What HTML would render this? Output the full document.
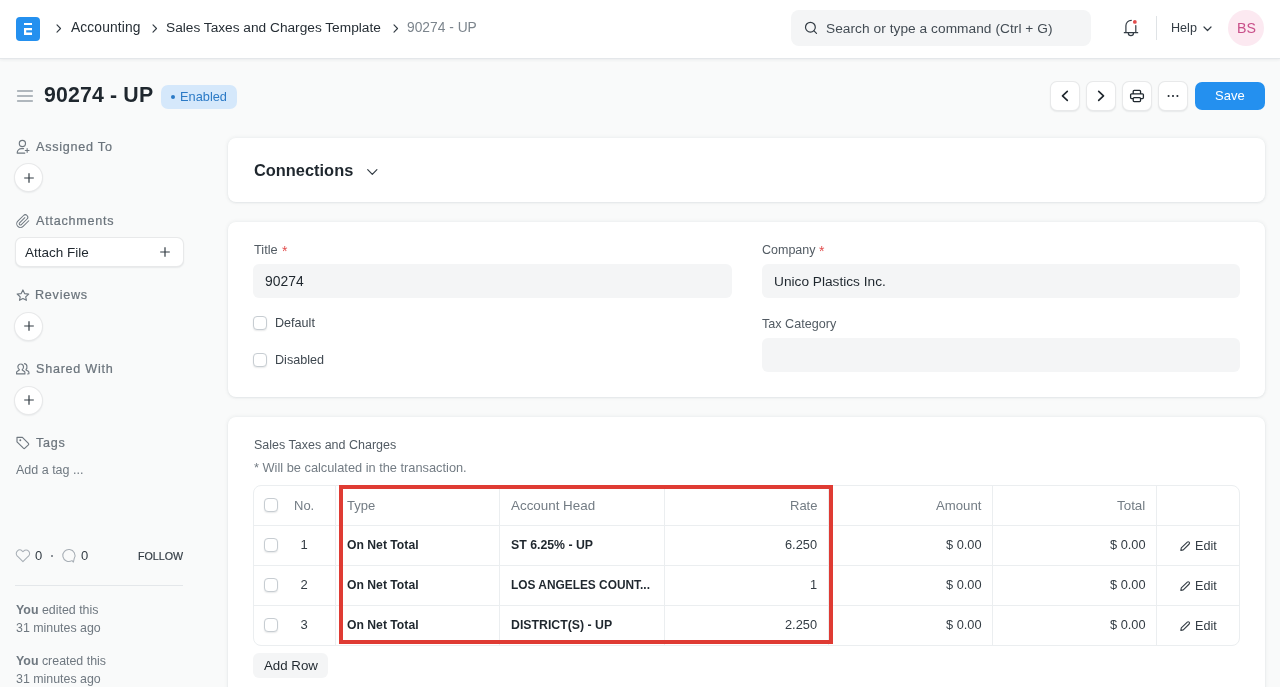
<!DOCTYPE html>
<html><head><meta charset="utf-8"><title>90274 - UP</title>
<style>
*{box-sizing:border-box;margin:0;padding:0}
html,body{width:1280px;height:687px;overflow:hidden}
body{background:#F9FAFA;font-family:"Liberation Sans",sans-serif;position:relative;color:#1F272E}
.t{position:absolute;line-height:1;white-space:nowrap;will-change:transform}
.a{position:absolute}
svg{position:absolute;overflow:visible}
.nav{position:absolute;left:0;top:0;width:1280px;height:59px;background:#fff;border-bottom:1px solid #E4E7EA;box-shadow:0 1px 3px rgba(25,39,52,0.07)}
.card{position:absolute;left:228px;width:1037px;background:#fff;border-radius:8px;box-shadow:0 1px 2px rgba(25,39,52,0.05),0 0 4px rgba(25,39,52,0.09)}
.inp{position:absolute;background:#F4F5F6;border-radius:6px;height:33.5px}
.cb{position:absolute;width:14px;height:14px;border:1px solid #C7CDD2;border-radius:4px;background:#fff;box-shadow:0 1px 1.5px rgba(25,39,52,0.10)}
.btn{position:absolute;background:#fff;border-radius:7px;border:1px solid rgba(25,39,52,0.10);box-shadow:0 1px 1.5px rgba(25,39,52,0.08)}
.circ{position:absolute;width:29px;height:29px;border-radius:50%;background:#fff;border:1px solid rgba(25,39,52,0.10);box-shadow:0 1px 1.5px rgba(25,39,52,0.07)}
</style></head><body>
<div class="nav"></div>
<div class="a" style="left:16px;top:17px;width:24px;height:24px;background:#2490EF;border-radius:4px"></div>
<svg style="left:16px;top:17px" width="24" height="24" viewBox="0 0 24 24"><path d="M8 6h8v2.1H8z M8 11h8v2.3h-5.8v2.25h5.8v2.55H8z" fill="#fff"/></svg>
<svg style="left:55.5px;top:24px" width="6" height="9" viewBox="0 0 6 9"><path d="M1 0.9 L4.5 4.5 L1 8.1" fill="none" stroke="#333C44" stroke-width="1.15" stroke-linecap="round" stroke-linejoin="round"/></svg>
<svg style="left:151.5px;top:24px" width="6" height="9" viewBox="0 0 6 9"><path d="M1 0.9 L4.5 4.5 L1 8.1" fill="none" stroke="#333C44" stroke-width="1.15" stroke-linecap="round" stroke-linejoin="round"/></svg>
<svg style="left:392.5px;top:24px" width="6" height="9" viewBox="0 0 6 9"><path d="M1 0.9 L4.5 4.5 L1 8.1" fill="none" stroke="#333C44" stroke-width="1.15" stroke-linecap="round" stroke-linejoin="round"/></svg>
<div class="t" style="left:71.25px;top:21px;font-size:13.8px;color:#262E35;letter-spacing:0.12px;">Accounting</div>
<div class="t" style="left:166px;top:21px;font-size:13.7px;color:#262E35;">Sales Taxes and Charges Template</div>
<div class="t" style="left:407px;top:21px;font-size:13.8px;color:#7C858D;">90274 - UP</div>
<div class="a" style="left:791px;top:10px;width:300px;height:36px;background:#F4F5F6;border-radius:8px"></div>
<svg style="left:798px;top:16px" width="24" height="24" viewBox="0 0 24 24"><circle cx="12.4" cy="11.2" r="4.9" fill="none" stroke="#333C44" stroke-width="1.2"/><path d="M16 14.8 L18.5 17.3" stroke="#333C44" stroke-width="1.2" stroke-linecap="round"/></svg>
<div class="t" style="left:826px;top:22px;font-size:13.7px;color:#434C54;letter-spacing:0.05px;">Search or type a command (Ctrl + G)</div>
<svg style="left:1118px;top:14px" width="26" height="26" viewBox="0 0 26 26"><path d="M13.3 6.3 A5.4 5.4 0 0 0 7.9 11.7 V18 M17.8 11.5 V18 M6.3 18.7 H19.7 M10.3 19 A2.6 2.6 0 0 0 15.5 19" fill="none" stroke="#333C44" stroke-width="1.2" stroke-linecap="round" stroke-linejoin="round"/><circle cx="16.85" cy="7.95" r="1.9" fill="#E24C4C"/></svg>
<div class="a" style="left:1156px;top:16px;width:1px;height:24px;background:#DFE3E6"></div>
<div class="t" style="left:1170.5px;top:22px;font-size:12.6px;color:#333C44;">Help</div>
<svg style="left:1203px;top:26px" width="9" height="6" viewBox="0 0 9 6"><path d="M1 1 L4.5 4.5 L8 1" fill="none" stroke="#333C44" stroke-width="1.2" stroke-linecap="round" stroke-linejoin="round"/></svg>
<div class="a" style="left:1228px;top:10px;width:36px;height:36px;border-radius:50%;background:#FCE9F1"></div>
<div class="t" style="left:1236.5px;top:21px;font-size:14.2px;color:#C9508A;">BS</div>
<svg style="left:12px;top:84px" width="26" height="24" viewBox="0 0 26 24"><path d="M5.6 7 H20.3 M5.6 12 H20.3 M5.6 17 H20.3" stroke="#98A1A9" stroke-width="1.5" stroke-linecap="round"/></svg>
<div class="t" style="left:43.5px;top:85px;font-size:21.3px;color:#1F272E;font-weight:700;letter-spacing:0.15px;">90274 - UP</div>
<div class="a" style="left:161.25px;top:85px;width:75.5px;height:24px;background:#D5E8FB;border-radius:7px"></div>
<div class="a" style="left:171px;top:94.75px;width:4px;height:4px;border-radius:50%;background:#2B7AC6"></div>
<div class="t" style="left:180px;top:91px;font-size:12.8px;color:#2B7AC6;">Enabled</div>
<div class="btn" style="left:1050px;top:81px;width:29.5px;height:29.5px"></div>
<div class="btn" style="left:1086px;top:81px;width:29.5px;height:29.5px"></div>
<div class="btn" style="left:1122px;top:81px;width:29.5px;height:29.5px"></div>
<div class="btn" style="left:1158px;top:81px;width:29.5px;height:29.5px"></div>
<svg style="left:1061px;top:90px" width="8" height="12" viewBox="0 0 8 12"><path d="M6.3 1.4 L1.5 5.9 L6.3 10.4" fill="none" stroke="#1F272E" stroke-width="1.65" stroke-linecap="round" stroke-linejoin="round"/></svg>
<svg style="left:1097px;top:90px" width="8" height="12" viewBox="0 0 8 12"><path d="M1.7 1.4 L6.5 5.9 L1.7 10.4" fill="none" stroke="#1F272E" stroke-width="1.65" stroke-linecap="round" stroke-linejoin="round"/></svg>
<svg style="left:1123px;top:82px" width="28" height="28" viewBox="0 0 28 28"><path d="M10.2 11.6 V9.4 A1 1 0 0 1 11.2 8.4 H16.55 A1 1 0 0 1 17.55 9.4 V11.6 M10.2 16.6 H8.6 A1 1 0 0 1 7.6 15.6 V12.8 A1 1 0 0 1 8.6 11.8 H19.4 A1 1 0 0 1 20.4 12.8 V15.6 A1 1 0 0 1 19.4 16.6 H17.55 M11.2 15.7 H16.55 A1 1 0 0 1 17.55 16.7 V18.6 A1 1 0 0 1 16.55 19.6 H11.2 A1 1 0 0 1 10.2 18.6 V16.7 A1 1 0 0 1 11.2 15.7 Z" fill="none" stroke="#1F272E" stroke-width="1.3" stroke-linejoin="round"/></svg>
<svg style="left:1166px;top:94px" width="14" height="4" viewBox="0 0 14 4"><circle cx="2.6" cy="2" r="1.05" fill="#1F272E"/><circle cx="7" cy="2" r="1.05" fill="#1F272E"/><circle cx="11.4" cy="2" r="1.05" fill="#1F272E"/></svg>
<div class="a" style="left:1195px;top:81.5px;width:70px;height:28.5px;background:#2490EF;border-radius:7px"></div>
<div class="t" style="left:1215px;top:89px;font-size:13px;color:#FFFFFF;">Save</div>
<div class="t" style="left:36px;top:141px;font-size:12.6px;color:#6B747C;letter-spacing:0.75px;-webkit-text-stroke:0.22px #6B747C;">Assigned To</div>
<div class="t" style="left:36px;top:215px;font-size:12.6px;color:#6B747C;letter-spacing:0.75px;-webkit-text-stroke:0.22px #6B747C;">Attachments</div>
<div class="t" style="left:35px;top:289px;font-size:12.6px;color:#6B747C;letter-spacing:0.75px;-webkit-text-stroke:0.22px #6B747C;">Reviews</div>
<div class="t" style="left:36px;top:363px;font-size:12.6px;color:#6B747C;letter-spacing:0.75px;-webkit-text-stroke:0.22px #6B747C;">Shared With</div>
<div class="t" style="left:36px;top:437px;font-size:12.6px;color:#6B747C;letter-spacing:0.75px;-webkit-text-stroke:0.22px #6B747C;">Tags</div>
<svg style="left:14px;top:138px" width="20" height="20" viewBox="0 0 20 20"><circle cx="8.4" cy="5.5" r="3.1" fill="none" stroke="#6F7880" stroke-width="1.15" stroke-linecap="round" stroke-linejoin="round"/><path d="M9.6 10.6 H7.6 A4.4 4.4 0 0 0 3.2 15 V15.1 H10.8 M11.3 12.5 H15 M13.15 10.65 V14.35" fill="none" stroke="#6F7880" stroke-width="1.15" stroke-linecap="round" stroke-linejoin="round"/></svg>
<svg style="left:14px;top:211px" width="20" height="20" viewBox="0 0 20 20"><g transform="translate(1.5 2.9) scale(0.62)"><path d="M21.44 11.05l-9.19 9.19a6 6 0 0 1-8.49-8.49l9.19-9.19a4 4 0 0 1 5.66 5.66l-9.2 9.19a2 2 0 0 1-2.83-2.83l8.49-8.48" fill="none" stroke="#6F7880" stroke-width="1.65" stroke-linecap="round" stroke-linejoin="round"/></g></svg>
<svg style="left:14px;top:286px" width="20" height="20" viewBox="0 0 20 20"><path d="M8.9 3.9 L10.6 7.6 L14.7 8.1 L11.7 10.9 L12.4 14.3 L8.9 12.5 L5.5 14.3 L6.2 10.9 L3.2 8 L7.2 7.6 Z" fill="none" stroke="#6F7880" stroke-width="1.15" stroke-linecap="round" stroke-linejoin="round"/></svg>
<svg style="left:14px;top:360px" width="20" height="20" viewBox="0 0 20 20"><path d="M6.6 4 A2.7 2.9 0 0 0 3.9 6.9 A3 3 0 0 0 5.3 9.6 V10.1 L3.1 11.4 A1.4 1.4 0 0 0 2.6 12.5 V13.9 H10.9 V12.5 A1.4 1.4 0 0 0 10.4 11.4 L8.2 10.1 V9.6 A3 3 0 0 0 9.5 6.9 A2.7 2.9 0 0 0 6.6 4 Z M10.5 3.6 A2.9 2.9 0 0 1 12.9 6.6 A3 3 0 0 1 12 9.5 V10.1 L14.3 11.3 A1.4 1.4 0 0 1 14.9 12.4 V13.8 L13.6 14" fill="none" stroke="#6F7880" stroke-width="1.15" stroke-linecap="round" stroke-linejoin="round"/></svg>
<svg style="left:14px;top:433px" width="20" height="20" viewBox="0 0 20 20"><path d="M3 4.3 H8.4 L14.4 10.3 A1.1 1.1 0 0 1 14.4 11.8 L10.9 15.2 A1.1 1.1 0 0 1 9.4 15.2 L3 8.9 Z" fill="none" stroke="#6F7880" stroke-width="1.15" stroke-linecap="round" stroke-linejoin="round"/><circle cx="6.3" cy="7.3" r="0.95" fill="#6F7880"/></svg>
<div class="circ" style="left:14.25px;top:163px"></div>
<svg style="left:23.75px;top:172.5px" width="10" height="10" viewBox="0 0 10 10"><path d="M5 0.2 V9.8 M0.2 5 H9.8" stroke="#333C44" stroke-width="1.2"/></svg>
<div class="circ" style="left:14.25px;top:311.5px"></div>
<svg style="left:23.75px;top:321.0px" width="10" height="10" viewBox="0 0 10 10"><path d="M5 0.2 V9.8 M0.2 5 H9.8" stroke="#333C44" stroke-width="1.2"/></svg>
<div class="circ" style="left:14.25px;top:385.5px"></div>
<svg style="left:23.75px;top:395.0px" width="10" height="10" viewBox="0 0 10 10"><path d="M5 0.2 V9.8 M0.2 5 H9.8" stroke="#333C44" stroke-width="1.2"/></svg>
<div class="btn" style="left:14.5px;top:237px;width:169px;height:29.5px"></div>
<div class="t" style="left:25px;top:246px;font-size:13.5px;color:#1F272E;">Attach File</div>
<svg style="left:160px;top:247px" width="10" height="10" viewBox="0 0 10 10"><path d="M5 0.2 V9.8 M0.2 5 H9.8" stroke="#333C44" stroke-width="1.2"/></svg>
<div class="t" style="left:15.7px;top:464px;font-size:12.5px;color:#6F7880;">Add a tag ...</div>
<svg style="left:14px;top:545px" width="20" height="20" viewBox="0 0 20 20"><g transform="translate(1.25 3.1) scale(0.64)"><path d="M20.84 4.61a5.5 5.5 0 0 0-7.78 0L12 5.67l-1.06-1.06a5.5 5.5 0 0 0-7.78 7.78l1.06 1.06L12 21.23l7.78-7.78 1.06-1.06a5.5 5.5 0 0 0 0-7.78z" fill="none" stroke="#A7AEB5" stroke-width="1.6" stroke-linejoin="round"/></g></svg>
<div class="t" style="left:35.2px;top:549px;font-size:13px;color:#333C44;">0</div>
<div class="a" style="left:50.5px;top:555px;width:2px;height:2px;border-radius:50%;background:#687178"></div>
<svg style="left:62px;top:545px" width="20" height="20" viewBox="0 0 20 20"><path d="M10 15.6 A6.1 6 0 1 1 12.3 13.2 L11.4 17.1 Z" fill="none" stroke="#A7AEB5" stroke-width="1.05" stroke-linejoin="round"/></svg>
<div class="t" style="left:80.9px;top:549px;font-size:13px;color:#333C44;">0</div>
<div class="t" style="left:138px;top:551px;font-size:10.7px;color:#333C44;-webkit-text-stroke:0.2px #333C44;">FOLLOW</div>
<div class="a" style="left:15px;top:585px;width:168px;height:1px;background:#E4E7EA"></div>
<div class="t" style="left:16px;top:604px;font-size:12.4px;color:#6F7880;"><b>You</b> edited this</div>
<div class="t" style="left:16px;top:622px;font-size:12.4px;color:#6F7880;">31 minutes ago</div>
<div class="t" style="left:16px;top:655px;font-size:12.4px;color:#6F7880;"><b>You</b> created this</div>
<div class="t" style="left:16px;top:673px;font-size:12.4px;color:#6F7880;">31 minutes ago</div>
<div class="card" style="top:138px;height:64px"></div>
<div class="t" style="left:253.75px;top:162px;font-size:16.4px;color:#1F272E;font-weight:700;">Connections</div>
<svg style="left:367px;top:169px" width="11" height="7" viewBox="0 0 11 7"><path d="M0.7 0.7 L5.3 5.4 L9.9 0.7" fill="none" stroke="#333C44" stroke-width="1.2" stroke-linecap="round" stroke-linejoin="round"/></svg>
<div class="card" style="top:222px;height:175px"></div>
<div class="t" style="left:254.1px;top:244px;font-size:12.8px;color:#525B63;">Title</div>
<div class="t" style="left:281.6px;top:244px;font-size:14px;color:#E24C4C;">*</div>
<div class="inp" style="left:253px;top:264px;width:479px"></div>
<div class="t" style="left:265px;top:275px;font-size:13.9px;color:#1F272E;">90274</div>
<div class="t" style="left:762.1px;top:244px;font-size:12.5px;color:#525B63;">Company</div>
<div class="t" style="left:819.2px;top:244px;font-size:14px;color:#E24C4C;">*</div>
<div class="inp" style="left:762px;top:264px;width:478px"></div>
<div class="t" style="left:774.4px;top:275px;font-size:13.7px;color:#1F272E;">Unico Plastics Inc.</div>
<div class="cb" style="left:253px;top:316px"></div>
<div class="t" style="left:274.5px;top:317px;font-size:12.6px;color:#3E474F;">Default</div>
<div class="cb" style="left:253px;top:353px"></div>
<div class="t" style="left:274.5px;top:354px;font-size:12.6px;color:#3E474F;">Disabled</div>
<div class="t" style="left:762px;top:318px;font-size:12.6px;color:#525B63;">Tax Category</div>
<div class="inp" style="left:762px;top:338px;width:478px"></div>
<div class="card" style="top:417px;height:300px"></div>
<div class="t" style="left:253.8px;top:439px;font-size:12.5px;color:#525B63;">Sales Taxes and Charges</div>
<div class="t" style="left:253.8px;top:462px;font-size:12.8px;color:#737C84;">* Will be calculated in the transaction.</div>
<div class="a" style="left:253px;top:485px;width:987px;height:161px;border:1px solid #EBEEF0;border-radius:8px"></div>
<div class="a" style="left:254px;top:525px;width:985px;height:1px;background:#EBEEF0"></div>
<div class="a" style="left:254px;top:565px;width:985px;height:1px;background:#EBEEF0"></div>
<div class="a" style="left:254px;top:605px;width:985px;height:1px;background:#EBEEF0"></div>
<div class="a" style="left:335px;top:486px;width:1px;height:159px;background:#EBEEF0"></div>
<div class="a" style="left:499px;top:486px;width:1px;height:159px;background:#EBEEF0"></div>
<div class="a" style="left:664px;top:486px;width:1px;height:159px;background:#EBEEF0"></div>
<div class="a" style="left:828px;top:486px;width:1px;height:159px;background:#EBEEF0"></div>
<div class="a" style="left:992px;top:486px;width:1px;height:159px;background:#EBEEF0"></div>
<div class="a" style="left:1156px;top:486px;width:1px;height:159px;background:#EBEEF0"></div>
<div class="cb" style="left:264px;top:498px"></div>
<div class="t" style="left:293.5px;top:499px;font-size:13px;color:#737C84;">No.</div>
<div class="t" style="left:347.2px;top:499px;font-size:13px;color:#737C84;">Type</div>
<div class="t" style="left:510.7px;top:499px;font-size:13.4px;color:#737C84;">Account Head</div>
<div class="t" style="right:462.79999999999995px;top:499px;font-size:13px;color:#737C84;">Rate</div>
<div class="t" style="right:299px;top:499px;font-size:13.2px;color:#737C84;">Amount</div>
<div class="t" style="right:134.5px;top:499px;font-size:13.4px;color:#737C84;">Total</div>
<div class="cb" style="left:264px;top:538px"></div>
<div class="t" style="left:284.3px;top:538px;font-size:13px;color:#333C44;width:40px;text-align:center;">1</div>
<div class="t" style="left:347.2px;top:539px;font-size:12.2px;color:#1F272E;font-weight:700;">On Net Total</div>
<div class="t" style="left:510.7px;top:539px;font-size:12.3px;color:#1F272E;font-weight:700;">ST 6.25% - UP</div>
<div class="t" style="right:462.79999999999995px;top:539px;font-size:12.8px;color:#333C44;">6.250</div>
<div class="t" style="right:298.5px;top:539px;font-size:12.8px;color:#333C44;">$ 0.00</div>
<div class="t" style="right:134.5px;top:539px;font-size:12.8px;color:#333C44;">$ 0.00</div>
<svg style="left:1180px;top:541px" width="10" height="10" viewBox="0 0 10 10"><path d="M7.3 1.1 A1.35 1.35 0 0 1 9.2 3 L3.3 8.9 L0.8 9.4 L1.3 6.9 Z" fill="none" stroke="#333C44" stroke-width="1.1" stroke-linejoin="round"/></svg>
<div class="t" style="left:1195px;top:540px;font-size:12.6px;color:#333C44;">Edit</div>
<div class="cb" style="left:264px;top:578px"></div>
<div class="t" style="left:284.3px;top:578px;font-size:13px;color:#333C44;width:40px;text-align:center;">2</div>
<div class="t" style="left:347.2px;top:579px;font-size:12.2px;color:#1F272E;font-weight:700;">On Net Total</div>
<div class="t" style="left:510.7px;top:580px;font-size:11.9px;color:#1F272E;font-weight:700;">LOS ANGELES COUNT...</div>
<div class="t" style="right:462.79999999999995px;top:579px;font-size:12.8px;color:#333C44;">1</div>
<div class="t" style="right:298.5px;top:579px;font-size:12.8px;color:#333C44;">$ 0.00</div>
<div class="t" style="right:134.5px;top:579px;font-size:12.8px;color:#333C44;">$ 0.00</div>
<svg style="left:1180px;top:581px" width="10" height="10" viewBox="0 0 10 10"><path d="M7.3 1.1 A1.35 1.35 0 0 1 9.2 3 L3.3 8.9 L0.8 9.4 L1.3 6.9 Z" fill="none" stroke="#333C44" stroke-width="1.1" stroke-linejoin="round"/></svg>
<div class="t" style="left:1195px;top:580px;font-size:12.6px;color:#333C44;">Edit</div>
<div class="cb" style="left:264px;top:618px"></div>
<div class="t" style="left:284.3px;top:618px;font-size:13px;color:#333C44;width:40px;text-align:center;">3</div>
<div class="t" style="left:347.2px;top:619px;font-size:12.2px;color:#1F272E;font-weight:700;">On Net Total</div>
<div class="t" style="left:510.7px;top:619px;font-size:12.3px;color:#1F272E;font-weight:700;">DISTRICT(S) - UP</div>
<div class="t" style="right:462.79999999999995px;top:619px;font-size:12.8px;color:#333C44;">2.250</div>
<div class="t" style="right:298.5px;top:619px;font-size:12.8px;color:#333C44;">$ 0.00</div>
<div class="t" style="right:134.5px;top:619px;font-size:12.8px;color:#333C44;">$ 0.00</div>
<svg style="left:1180px;top:621px" width="10" height="10" viewBox="0 0 10 10"><path d="M7.3 1.1 A1.35 1.35 0 0 1 9.2 3 L3.3 8.9 L0.8 9.4 L1.3 6.9 Z" fill="none" stroke="#333C44" stroke-width="1.1" stroke-linejoin="round"/></svg>
<div class="t" style="left:1195px;top:620px;font-size:12.6px;color:#333C44;">Edit</div>
<div class="a" style="left:339px;top:484.5px;width:493.5px;height:159.5px;border:4px solid #DF3B33"></div>
<div class="a" style="left:253px;top:653px;width:75px;height:25px;background:#F4F5F6;border-radius:6px"></div>
<div class="t" style="left:263.75px;top:659px;font-size:13.3px;color:#1F272E;">Add Row</div>
</body></html>
